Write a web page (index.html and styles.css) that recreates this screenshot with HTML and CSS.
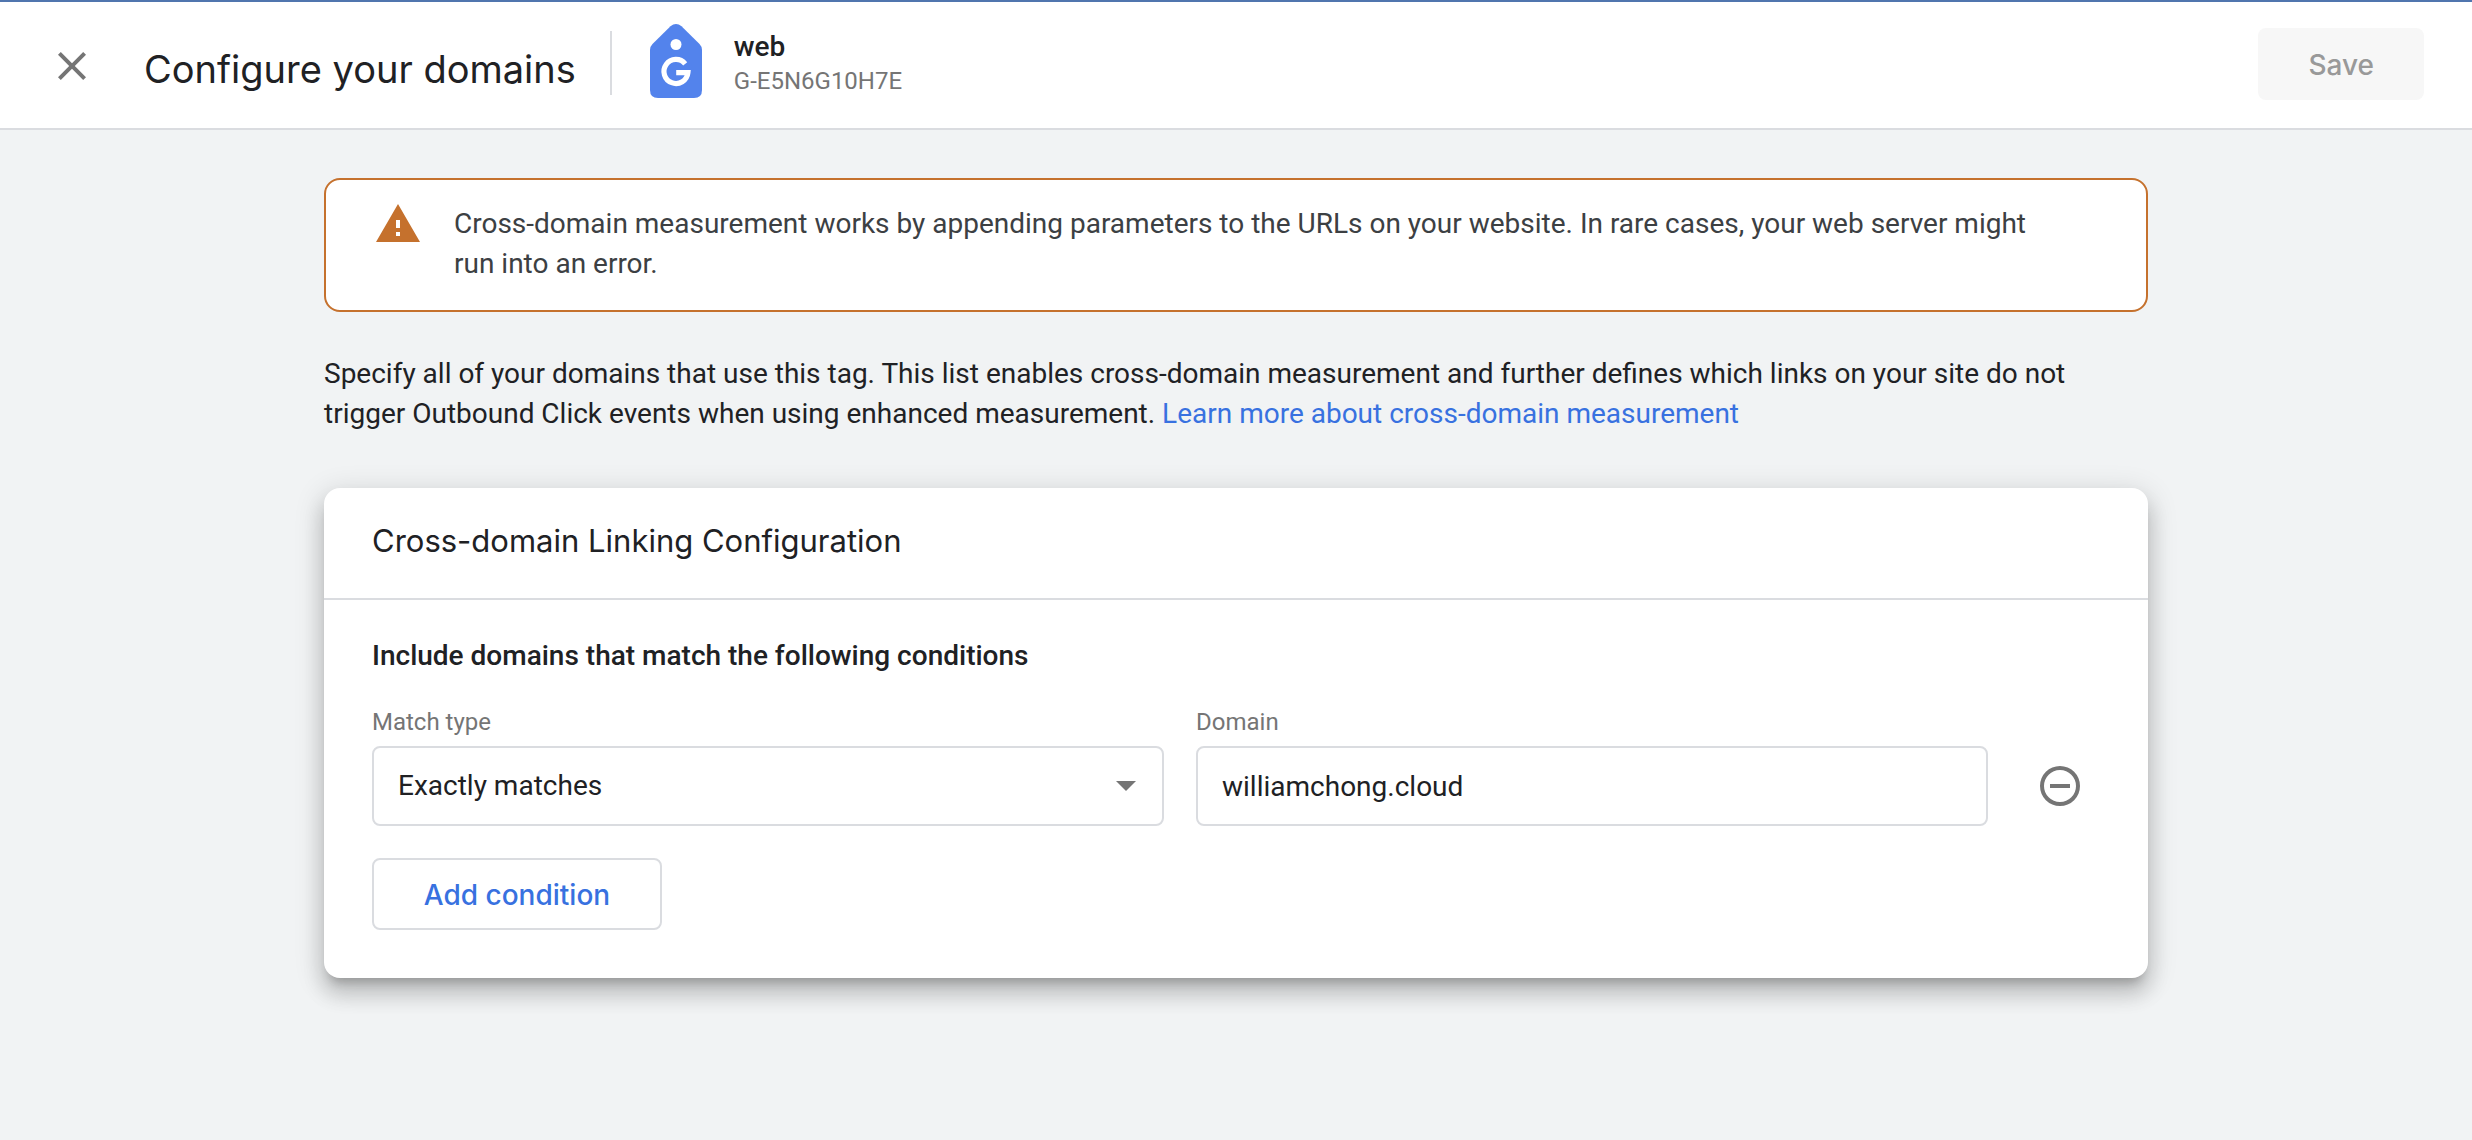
FILE: index.html
```html
<!DOCTYPE html>
<html lang="en">
<head>
<meta charset="utf-8">
<meta name="viewport" content="width=device-width, initial-scale=1">
<title>Configure your domains</title>
<link rel="stylesheet" href="styles.css">
</head>
<body>
<header class="topbar">
  <button class="icon-button close" type="button" aria-label="Close">
    <svg class="icon" viewBox="0 0 24 24" aria-hidden="true"><path fill="currentColor" d="M19 6.41 17.59 5 12 10.59 6.41 5 5 6.41 10.59 12 5 17.59 6.41 19 12 13.41 17.59 19 19 17.59 13.41 12z"/></svg>
  </button>
  <h1 class="page-title">Configure your domains</h1>
  <div class="tag">
    <svg class="tag-logo" viewBox="0 0 52 74" aria-hidden="true">
      <path fill="#5383ec" d="M20.500 2.300Q26-2.300 31.500 2.300L49.500 20Q52 22.500 52 26V66Q52 74 44 74H8Q0 74 0 66V26Q0 22.500 2.500 20Z"/>
      <circle cx="26" cy="20.500" r="5.500" fill="#fff"/>
      <path fill="none" stroke="#fff" stroke-width="5.200" d="M35.200 39.800A12 12 0 1 0 37.900 48.700H26.200"/>
    </svg>
    <div class="tag-text">
      <div class="tag-name">web</div>
      <div class="tag-id">G-E5N6G10H7E</div>
    </div>
  </div>
  <button class="button button-save" type="button" disabled>Save</button>
</header>
<main class="content">
  <div class="alert" role="note">
    <svg class="icon alert-icon" viewBox="0 0 24 24" aria-hidden="true"><path fill="currentColor" d="M1 21h22L12 2zm12-3h-2v-2h2zm0-4h-2v-4h2z"/></svg>
    <p class="alert-text">Cross-domain measurement works by appending parameters to the URLs on your website. In rare cases, your web server might<br>run into an error.</p>
  </div>
  <p class="intro">Specify all of your domains that use this tag. This list enables cross-domain measurement and further defines which links on your site do not<br>trigger Outbound Click events when using enhanced measurement. <a class="link" href="#learn-more">Learn more about cross-domain measurement</a></p>
  <section class="card">
    <h2 class="card-title">Cross-domain Linking Configuration</h2>
    <form class="card-body">
      <h3 class="card-subtitle">Include domains that match the following conditions</h3>
      <div class="condition">
        <div class="field">
          <label class="label" for="match-type">Match type</label>
          <div class="select-box">
            <select class="control" id="match-type"><option>Exactly matches</option><option>Contains</option></select>
            <svg class="arrow" viewBox="0 0 20 10" aria-hidden="true"><path fill="currentColor" d="M0 0h20L10 10z"/></svg>
          </div>
        </div>
        <div class="field">
          <label class="label" for="domain">Domain</label>
          <input class="control" id="domain" type="text" value="williamchong.cloud">
        </div>
        <button class="icon-button remove" type="button" aria-label="Remove condition">
          <svg class="icon" viewBox="0 0 24 24" aria-hidden="true"><path fill="currentColor" d="M7 11v2h10v-2zm5-9a10 10 0 1 0 0 20 10 10 0 0 0 0-20m0 18a8 8 0 1 1 0-16 8 8 0 0 1 0 16"/></svg>
        </button>
      </div>
      <button class="button button-add" type="button">Add condition</button>
    </form>
  </section>
</main>
</body>
</html>
```
FILE: styles.css
```css
* {
  box-sizing: border-box;
}

body {
  margin: 0;
  min-height: 100vh;
  background: #f1f3f4;
  color: #202124;
  font: 28px/40px Roboto, "Noto Sans", sans-serif;
}

h1, h2, h3, p {
  margin: 0;
}

button, input, select {
  font: inherit;
  color: inherit;
}

.topbar {
  display: flex;
  align-items: center;
  min-height: 130px;
  padding: 0 48px 4px;
  border-top: 2px solid #5075ae;
  border-bottom: 2px solid #dadce0;
  background: #fff;
}

.icon {
  display: block;
  flex: none;
  width: 48px;
  height: 48px;
}

.icon-button {
  flex: none;
  padding: 0;
  border: 0;
  background: none;
  color: #757575;
  cursor: pointer;
}

.close {
  padding-top: 6px;
}

.page-title {
  margin-left: 48px;
  padding-top: 12px;
  font-family: Inter, Roboto, sans-serif;
  font-size: 38px;
  line-height: 48px;
  font-weight: 400;
  white-space: nowrap;
}

.tag {
  display: flex;
  align-items: center;
  gap: 32px;
  height: 64px;
  margin-left: 34px;
  padding-left: 38px;
  border-left: 2px solid #dadce0;
}

.tag-logo {
  display: block;
  width: 52px;
  height: 74px;
  margin-bottom: 4px;
}

.tag-name {
  font-weight: 500;
  line-height: 36px;
}

.tag-id {
  color: #757575;
  font-size: 24px;
  line-height: 32px;
}

.button {
  height: 72px;
  padding: 2px 48px 0;
  border: 2px solid transparent;
  border-radius: 8px;
  font-family: Inter, Roboto, sans-serif;
  font-weight: 500;
  cursor: pointer;
}

.button-save {
  margin-top: 2px;
  margin-left: auto;
  background: #f7f7f7;
  color: #999;
}

.content {
  max-width: 1920px;
  margin: 0 auto;
  padding: 48px;
}

.alert {
  display: flex;
  gap: 32px;
  padding: 20px 48px 26px;
  border: 2px solid #c5712d;
  border-radius: 16px;
  background: #fff;
}

.alert-icon {
  color: #c5712d;
}

.alert-text {
  padding-top: 4px;
  color: #3c4043;
}

.intro {
  margin-top: 42px;
}

.link {
  color: #3871e0;
  text-decoration: none;
}

.card {
  margin-top: 54px;
  border-radius: 16px;
  background: #fff;
  box-shadow: 0 10px 10px -6px rgba(0, 0, 0, 0.2), 0 16px 20px 2px rgba(0, 0, 0, 0.14), 0 6px 28px 4px rgba(0, 0, 0, 0.12);
}

.card-title {
  padding: 32px 48px 36px;
  border-bottom: 2px solid #dadce0;
  font-family: Inter, Roboto, sans-serif;
  font-size: 31px;
  line-height: 42px;
  font-weight: 400;
}

.card-body {
  padding: 36px 48px 48px;
}

.card-subtitle {
  font-size: 28px;
  font-weight: 500;
}

.condition {
  display: flex;
  align-items: flex-end;
  gap: 32px;
  margin: 28px 0 32px;
}

.field {
  flex: 1;
}

.label {
  display: block;
  padding-top: 2px;
  margin-bottom: 8px;
  color: #757575;
  font-size: 24px;
  line-height: 32px;
}

.select-box {
  display: grid;
  align-items: center;
}

.select-box > * {
  grid-area: 1 / 1;
}

.control {
  display: block;
  width: 100%;
  height: 80px;
  padding: 0 24px;
  border: 2px solid #dadce0;
  border-radius: 8px;
  background: #fff;
  appearance: none;
}

.arrow {
  justify-self: end;
  width: 20px;
  height: 10px;
  margin-right: 28px;
  color: #757575;
  pointer-events: none;
}

.remove {
  margin: 0 16px;
  padding: 16px 0;
}

.button-add {
  min-width: 290px;
  border-color: #dadce0;
  background: #fff;
  color: #3871e0;
}
```
